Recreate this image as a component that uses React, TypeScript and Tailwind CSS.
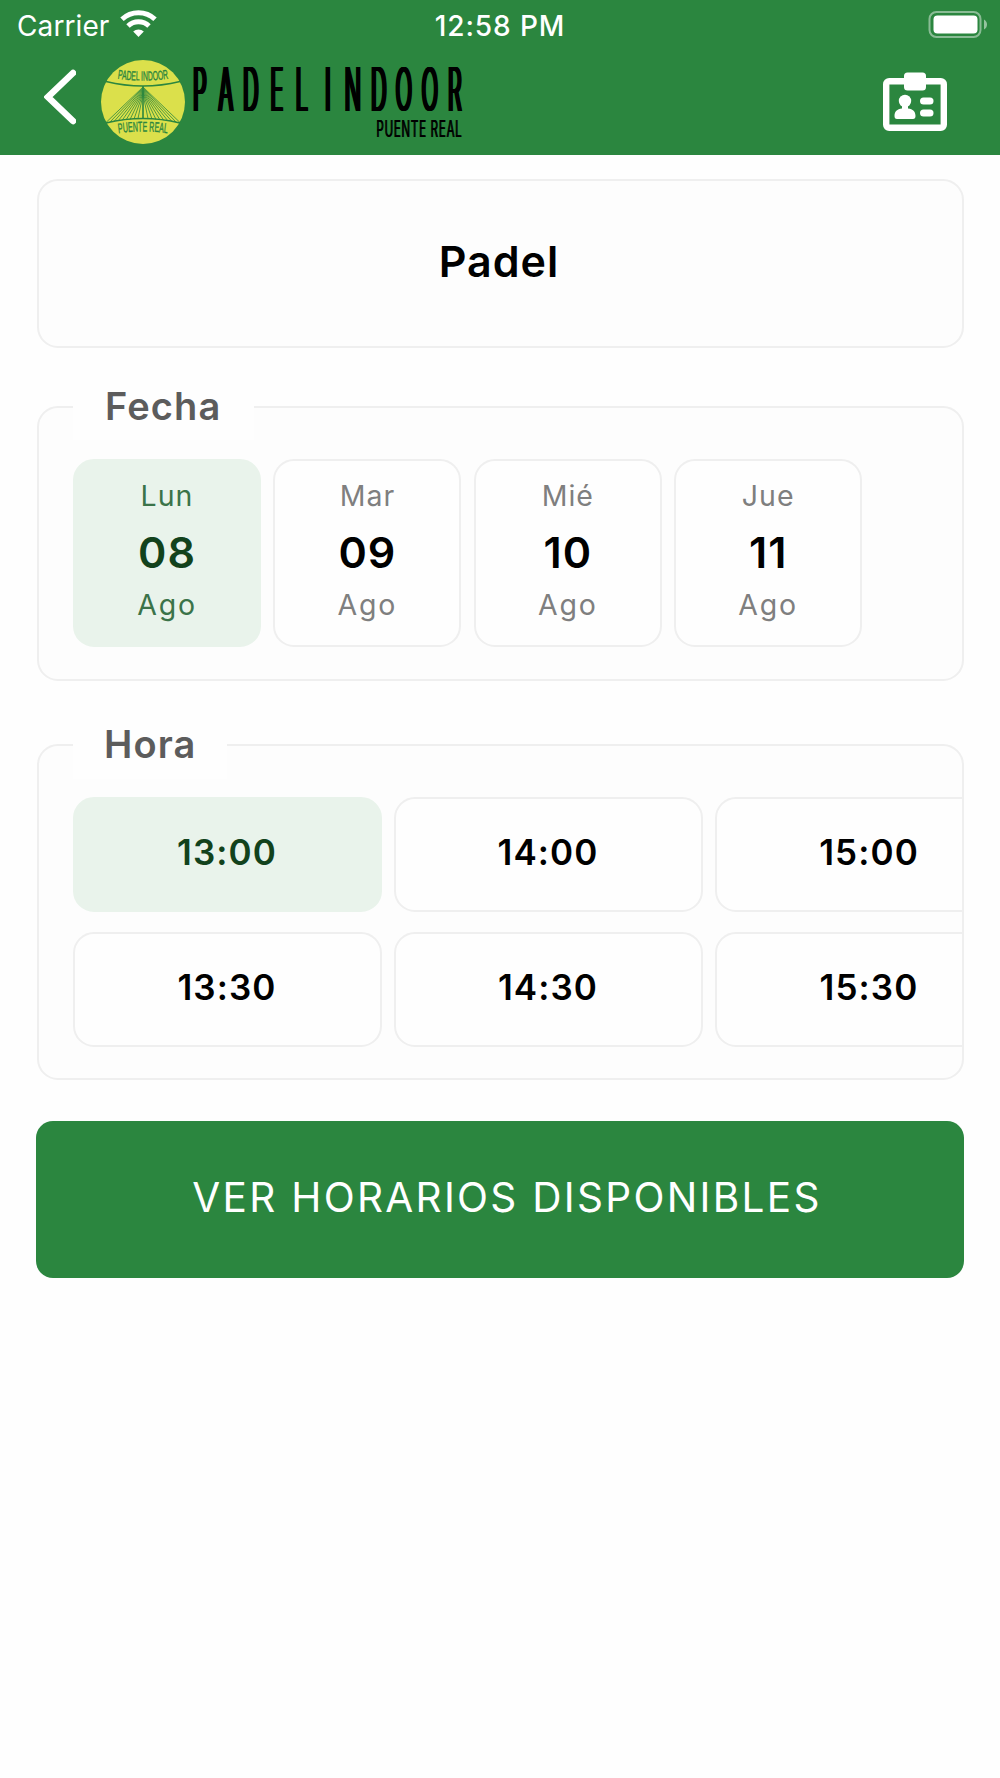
import clsx from "clsx";

interface Day {
  weekday: string;
  day: string;
  month: string;
}

const days: Day[] = [
  { weekday: "Lun", day: "08", month: "Ago" },
  { weekday: "Mar", day: "09", month: "Ago" },
  { weekday: "Mié", day: "10", month: "Ago" },
  { weekday: "Jue", day: "11", month: "Ago" },
];

// each column holds the full hour and the half hour
const slots = [
  ["13:00", "13:30"],
  ["14:00", "14:30"],
  ["15:00", "15:30"],
];

const cables = [5, 9, 13, 17, 21, 25, 29, 33, 37];

function StatusBar() {
  return (
    <div className="grid h-[51px] grid-cols-3 items-center pl-[17px] pr-3 text-[28px] leading-none text-white">
      <div className="flex items-center gap-[11px]">
        <span className="tracking-[0.1px]">Carrier</span>
        <svg width="37" height="27" viewBox="0 0 37 27" className="-mt-1" fill="none" stroke="white">
          <path d="M2 9.2a24 24 0 0 1 33 0" strokeWidth="5" />
          <path d="M8 16a15.3 15.3 0 0 1 21 0" strokeWidth="5" />
          <path d="M18.5 27l-5.3-5.4a7.6 7.6 0 0 1 10.6 0z" fill="white" stroke="none" />
        </svg>
      </div>
      <span className="pr-[5px] text-center font-medium tracking-[0.9px]">12:58 PM</span>
      <svg width="60" height="27" viewBox="0 0 60 27" className="-mt-[3px] justify-self-end">
        <rect x="1.5" y="1" width="51" height="25" rx="7" fill="none" stroke="white" strokeOpacity="0.45" strokeWidth="2" />
        <rect x="5.5" y="4.5" width="44" height="18" rx="4" fill="white" />
        <path d="M56 8.500c4 2 4 8 0 10z" fill="white" fillOpacity="0.5" />
      </svg>
    </div>
  );
}

function ClubBadge() {
  return (
    <svg width="86" height="86" viewBox="-43 -43 86 86" className="ml-6 mt-2.5 shrink-0">
      <defs>
        <path id="arc-top" d="M-30 -24Q0 -19 30 -24" />
        <path id="arc-bottom" d="M-30 32Q0 27 30 32" />
      </defs>
      <circle r="42" fill="#dbe04b" />
      <g stroke="#2b863f" fill="none">
        <path d="M-37 -20.500Q0 -11.500 37 -20.500" strokeWidth="1.5" />
        <path d="M-37 21Q0 12 37 21" strokeWidth="1.5" />
        <path d="M0 -16V17" strokeWidth="1.600" />
        {cables.map((x, i) => (
          <path
            key={x}
            d={`M0 ${-15 + (8 - i) * 0.9}L${-x} ${16.5 + i * 0.5}M0 ${-15 + (8 - i) * 0.9}L${x} ${16.5 + i * 0.5}`}
            strokeWidth="0.8"
          />
        ))}
      </g>
      <g
        fill="#2b863f"
        stroke="#2b863f"
        strokeWidth="0.4"
        fontFamily="Liberation Sans Narrow, Liberation Sans, sans-serif"
        textAnchor="middle"
      >
        <text fontSize="13" textLength="51" lengthAdjust="spacingAndGlyphs">
          <textPath href="#arc-top" startOffset="50%">PADEL INDOOR</textPath>
        </text>
        <text fontSize="14" textLength="49" lengthAdjust="spacingAndGlyphs">
          <textPath href="#arc-bottom" startOffset="50%">PUENTE REAL</textPath>
        </text>
      </g>
    </svg>
  );
}

function Wordmark() {
  return (
    <div className="ml-px mt-2 flex w-[281px] flex-col text-black">
      <div className="grid h-[54px] grid-cols-11">
        {"PADELINDOOR".split("").map((letter, i) => (
          <span
            key={i}
            className="flex origin-center scale-x-[0.36] justify-center text-[60px] font-light leading-[54px] [text-shadow:2px_0_#000,-2px_0_#000,4px_0_#000,-4px_0_#000]"
          >
            {letter}
          </span>
        ))}
      </div>
      <span className="mr-1.5 mt-px origin-right scale-x-[0.5] self-end whitespace-nowrap text-[23px] leading-[24px] tracking-[1.5px] [text-shadow:1.500px_0_#000]">
        PUENTE REAL
      </span>
    </div>
  );
}

function CardIcon() {
  return (
    <svg width="64" height="60" viewBox="0 0 64 60" className="ml-auto mr-[53px] mt-[9px]" fill="white">
      <rect x="3.200" y="9.200" width="57.600" height="46.600" rx="3" fill="none" stroke="white" strokeWidth="6.400" />
      <rect x="21" y="0.500" width="22" height="18" rx="3.500" />
      <circle cx="22" cy="29" r="6.200" />
      <path d="M19 33h6v3.500c5 .5 7.500 3 7.500 7.500 0 2-.8 3-2.500 3H14c-1.700 0-2.500-1-2.500-3 0-4.500 2.500-7 7.500-7.500z" />
      <rect x="37" y="25.500" width="13.500" height="7" rx="3.500" />
      <rect x="37" y="37.500" width="13.500" height="7" rx="3.500" />
    </svg>
  );
}

function DayCard({ item, selected }: { item: Day; selected: boolean }) {
  return (
    <button
      className={clsx(
        "flex h-[188px] w-[188px] shrink-0 flex-col items-center rounded-[21px] border-2 pt-[15px]",
        selected ? "border-[#e9f3eb] bg-[#e9f3eb] text-[#12421c]" : "border-[#efefef] bg-[#fefefe] text-black",
      )}
    >
      <span className={clsx("text-[28.500px] leading-10 tracking-[1px]", selected ? "text-[#3b7349]" : "text-[#7f7f7f]")}>
        {item.weekday}
      </span>
      <span className="text-[43px] font-semibold leading-[73px] tracking-[1px]">{item.day}</span>
      <span className={clsx("text-[28.500px] leading-8 tracking-[1.8px]", selected ? "text-[#3b7349]" : "text-[#7f7f7f]")}>
        {item.month}
      </span>
    </button>
  );
}

function SlotCard({ time, selected }: { time: string; selected: boolean }) {
  return (
    <button
      className={clsx(
        "flex h-[115px] w-[309px] items-center justify-center rounded-[21px] border-2 pb-[5px] pr-px text-[35px] font-semibold tracking-[1.1px]",
        selected ? "border-[#e9f3eb] bg-[#e9f3eb] text-[#12421c]" : "border-[#efefef] bg-[#fefefe] text-black",
      )}
    >
      {time}
    </button>
  );
}

export default function App() {
  return (
    <div className="min-h-[1778px] w-[1000px] overflow-hidden bg-[#fefefe] font-['Inter',sans-serif]">
      <header className="h-[155px] bg-[#2b863f]">
        <StatusBar />
        <div className="flex h-[92px] items-center">
          <svg width="32" height="56" viewBox="0 0 32 56" className="ml-[44px]" fill="none" stroke="white" strokeWidth="6.500" strokeLinecap="round">
            <path d="M29 4L4 28l25 24" />
          </svg>
          <ClubBadge />
          <Wordmark />
          <CardIcon />
        </div>
      </header>

      <main className="flex flex-col pl-[37px] pr-9 pt-6">
        <section className="flex h-[169px] items-center justify-center rounded-[21px] border-2 border-[#efefef] bg-[#fdfdfd] pb-[5px] pr-[3px]">
          <h1 className="text-[43px] font-semibold tracking-[1px]">Padel</h1>
        </section>

        <section className="mt-[58px] h-[275px] rounded-[21px] border-2 border-[#efefef] bg-[#fdfdfd] pl-[34px]">
          <h2 className="-mt-7 h-[60px] w-[181px] bg-[#fefefe] pl-8 text-[38px] font-semibold leading-[52px] tracking-[1.1px] text-[#5c5c5c]">
            Fecha
          </h2>
          <div className="mt-[19px] flex gap-[12.400px]">
            {days.map((item, i) => (
              <DayCard key={item.day} item={item} selected={i === 0} />
            ))}
          </div>
        </section>

        <section className="mt-[63px] h-[336px] rounded-[21px] border-2 border-[#efefef] bg-[#fdfdfd] pl-[34px]">
          <h2 className="-mt-7 h-[61px] w-[154px] bg-[#fefefe] pl-[31px] text-[38px] font-semibold leading-[52px] tracking-[1.1px] text-[#5c5c5c]">
            Hora
          </h2>
          <div className="mt-[18px] flex gap-3 overflow-hidden">
            {slots.map((column, i) => (
              <div key={i} className="flex shrink-0 flex-col gap-5">
                {column.map((time) => (
                  <SlotCard key={time} time={time} selected={time === "13:00"} />
                ))}
              </div>
            ))}
          </div>
        </section>

        <button className="-ml-px mt-[41px] h-[157px] rounded-[17px] bg-[#2b863f] pb-0.5 pl-3.5 text-[40.500px] tracking-[2.300px] text-white">
          VER HORARIOS DISPONIBLES
        </button>
      </main>
    </div>
  );
}
